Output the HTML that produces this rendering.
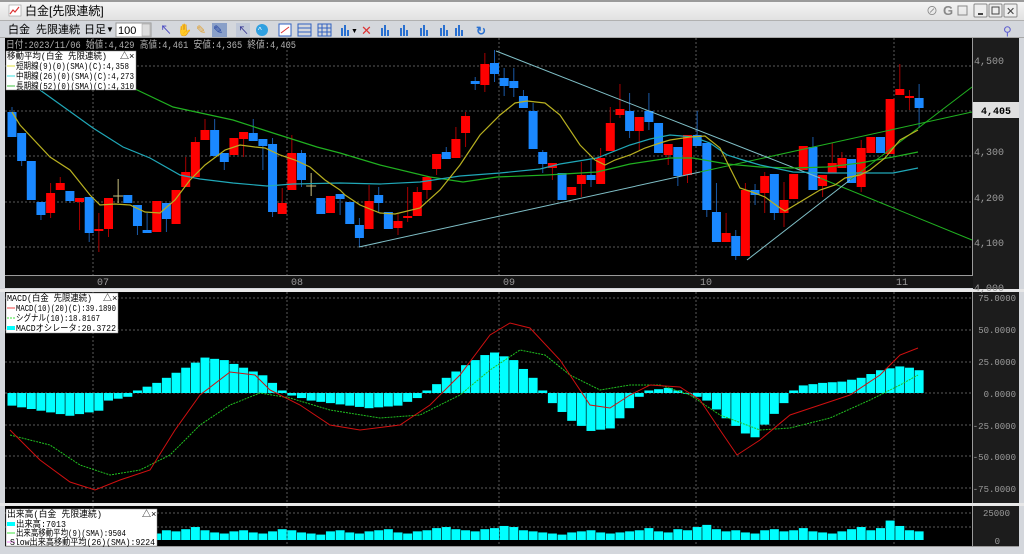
<!DOCTYPE html>
<html><head><meta charset="utf-8">
<style>
html,body{margin:0;padding:0;width:1024px;height:554px;overflow:hidden;background:#d4d7dc;}
svg{display:block}
text{font-family:"Liberation Mono","Noto Sans CJK JP",monospace;}
.ui{font-family:"Liberation Sans","Noto Sans CJK JP",sans-serif;}
</style></head><body>
<svg id="s" width="1024" height="554" xmlns="http://www.w3.org/2000/svg">
<defs><linearGradient id="tg" x1="0" y1="0" x2="0" y2="1"><stop offset="0" stop-color="#f4f4f4"/><stop offset="1" stop-color="#e2e2e2"/></linearGradient></defs>
<rect x="0" y="0" width="1024" height="554" fill="#d4d7dc"/>
<rect x="0" y="0" width="1024" height="2" fill="#9a9a9a"/>
<rect x="0" y="2" width="1024" height="18" fill="url(#tg)"/>
<rect x="0" y="20" width="1024" height="1" fill="#b0b0b0"/>
<rect x="0" y="21" width="1024" height="17" fill="#d4d7dc"/>
<rect x="0" y="37" width="1024" height="1" fill="#a8a8a8"/>
<rect x="9" y="5" width="12" height="11" fill="#fff" stroke="#999" stroke-width="0.6"/>
<polyline points="10,14 13,10 15,12 19,7" fill="none" stroke="#d33" stroke-width="1.2"/>
<text class="ui" x="25" y="15" font-size="12" fill="#000">白金[先限連続]</text>
<text class="ui" x="926" y="15" font-size="12" fill="#888">⊘</text>
<text class="ui" x="943" y="15" font-size="13" fill="#888" font-weight="bold">G</text>
<rect x="958" y="6" width="9" height="9" fill="none" stroke="#888"/>
<rect x="974" y="4" width="13" height="13" fill="#eee" stroke="#888" rx="1"/><rect x="978" y="13" width="5" height="2" fill="#444"/>
<rect x="989" y="4" width="13" height="13" fill="#eee" stroke="#888" rx="1"/><rect x="992" y="7" width="7" height="7" fill="none" stroke="#444"/>
<rect x="1004" y="4" width="13" height="13" fill="#eee" stroke="#888" rx="1"/><text class="ui" x="1006" y="15" font-size="11" fill="#444">✕</text>
<text class="ui" x="8" y="33" font-size="11" fill="#000">白金</text>
<text class="ui" x="36" y="33" font-size="11" fill="#000">先限連続</text>
<text class="ui" x="84" y="33" font-size="11" fill="#000">日足</text>
<text class="ui" x="106" y="32" font-size="8" fill="#000">▼</text>
<rect x="116" y="23" width="35" height="14" fill="#fff" stroke="#999"/>
<text class="ui" x="118" y="34" font-size="11" fill="#000">100</text>
<rect x="142" y="24" width="8" height="12" fill="#ddd" stroke="#999" stroke-width="0.5"/>
<text class="ui" x="160" y="34" font-size="12" fill="#4040c0">↖</text>
<text class="ui" x="177" y="34" font-size="12" fill="#d09040">✋</text>
<text class="ui" x="196" y="34" font-size="12" fill="#e0a030">✎</text>
<rect x="212" y="23" width="15" height="14" fill="#8aa0c8"/>
<text class="ui" x="213" y="34" font-size="12" fill="#2040a0">✎</text>
<rect x="236" y="23" width="14" height="14" fill="#c0c8d8"/><text class="ui" x="238" y="34" font-size="11" fill="#303090">↖</text>
<circle cx="262" cy="30" r="6" fill="#30a0e0"/><text class="ui" x="258" y="33" font-size="8" fill="#fff">^</text>
<rect x="279" y="24" width="12" height="12" fill="#fff" stroke="#3060c0"/><line x1="281" y1="33" x2="289" y2="27" stroke="#d33"/>
<rect x="298" y="24" width="13" height="12" fill="none" stroke="#3060c0"/><line x1="298" y1="28" x2="311" y2="28" stroke="#3060c0"/><line x1="298" y1="32" x2="311" y2="32" stroke="#3060c0"/>
<rect x="318" y="24" width="13" height="12" fill="none" stroke="#3060c0"/><line x1="318" y1="28" x2="331" y2="28" stroke="#3060c0"/><line x1="318" y1="32" x2="331" y2="32" stroke="#3060c0"/><line x1="322" y1="24" x2="322" y2="36" stroke="#3060c0"/><line x1="327" y1="24" x2="327" y2="36" stroke="#3060c0"/>
<g fill="#2a70d0"><rect x="341" y="28" width="2" height="8"/><rect x="344" y="25" width="2" height="11"/><rect x="347" y="30" width="2" height="6"/></g>
<text class="ui" x="351" y="33" font-size="7" fill="#000">▼</text>
<text class="ui" x="361" y="35" font-size="13" fill="#d33">✕</text>
<g fill="#2a70d0"><rect x="381" y="28" width="2" height="8"/><rect x="384" y="25" width="2" height="11"/><rect x="387" y="30" width="2" height="6"/></g>
<g fill="#2a70d0"><rect x="400" y="28" width="2" height="8"/><rect x="403" y="25" width="2" height="11"/><rect x="406" y="30" width="2" height="6"/></g>
<g fill="#2a70d0"><rect x="420" y="28" width="2" height="8"/><rect x="423" y="25" width="2" height="11"/><rect x="426" y="30" width="2" height="6"/></g>
<g fill="#2a70d0"><rect x="440" y="28" width="2" height="8"/><rect x="443" y="25" width="2" height="11"/><rect x="446" y="30" width="2" height="6"/></g>
<g fill="#2a70d0"><rect x="455" y="28" width="2" height="8"/><rect x="458" y="25" width="2" height="11"/><rect x="461" y="30" width="2" height="6"/></g>
<text class="ui" x="476" y="35" font-size="12" fill="#2a70d0" font-weight="bold">↻</text>
<text class="ui" x="1003" y="35" font-size="12" fill="#6060d0">⚲</text>
<rect x="5" y="38" width="968" height="238" fill="#000"/>
<rect x="5" y="276" width="968" height="12" fill="#151515"/>
<rect x="973" y="38" width="46" height="252" fill="#1c1c1c"/>
<rect x="972" y="38" width="1" height="238" fill="#9a9a9a"/>
<rect x="5" y="275" width="968" height="1" fill="#9a9a9a"/>
<rect x="0" y="289" width="1024" height="3" fill="#e8e8e8"/>
<rect x="5" y="292" width="968" height="211" fill="#000"/>
<rect x="973" y="292" width="46" height="211" fill="#1c1c1c"/>
<rect x="972" y="292" width="1" height="211" fill="#9a9a9a"/>
<rect x="0" y="503" width="1024" height="3" fill="#e8e8e8"/>
<rect x="5" y="506" width="968" height="40" fill="#000"/>
<rect x="973" y="506" width="46" height="40" fill="#1c1c1c"/>
<rect x="972" y="506" width="1" height="40" fill="#9a9a9a"/>
<rect x="5" y="546" width="1014" height="1" fill="#9a9a9a"/>
<g id="grid" stroke="#5a5a5a" stroke-width="1" stroke-dasharray="2,2" fill="none"></g>
<g id="plot"></g>
<g font-size="10" fill="#9a9a9a">
<text x="974" y="64">4,500</text>
<text x="974" y="155">4,300</text>
<text x="974" y="201">4,200</text>
<text x="974" y="246">4,100</text>
<text x="974" y="291">4,000</text>
<text x="97" y="285">07</text><text x="291" y="285">08</text><text x="503" y="285">09</text><text x="700" y="285">10</text><text x="896" y="285">11</text>
</g>
<g font-size="9" fill="#9a9a9a" text-anchor="end">
<text x="1016" y="301">75.0000</text>
<text x="1016" y="333">50.0000</text>
<text x="1016" y="365">25.0000</text>
<text x="1016" y="397">0.0000</text>
<text x="1016" y="429">-25.0000</text>
<text x="1016" y="460">-50.0000</text>
<text x="1016" y="492">-75.0000</text>
<text x="1010" y="516">25000</text>
<text x="1000" y="544">0</text>
</g>
<rect x="973" y="102" width="46" height="16" fill="#e0e0e0"/>
<text x="981" y="114" font-size="10" font-weight="bold" fill="#000">4,405</text>
<text x="6" y="48" font-size="10" fill="#b0b0b0" textLength="290" lengthAdjust="spacingAndGlyphs">日付:2023/11/06 始値:4,429 高値:4,461 安値:4,365 終値:4,405</text>
<g font-size="9" fill="#000">
<rect x="6" y="51" width="130" height="39" fill="#fff" stroke="#888" stroke-width="0.5"/>
<text x="7" y="59" textLength="100" lengthAdjust="spacingAndGlyphs">移動平均(白金 先限連続)</text><text x="120" y="59">△×</text>
<line x1="7" y1="66" x2="15" y2="66" stroke="#e0e040"/><text x="16" y="69" textLength="113" lengthAdjust="spacingAndGlyphs">短期線(9)(0)(SMA)(C):4,358</text>
<line x1="7" y1="76" x2="15" y2="76" stroke="#40e0e0"/><text x="16" y="79" textLength="118" lengthAdjust="spacingAndGlyphs">中期線(26)(0)(SMA)(C):4,273</text>
<line x1="7" y1="86" x2="15" y2="86" stroke="#40c040"/><text x="16" y="89" textLength="118" lengthAdjust="spacingAndGlyphs">長期線(52)(0)(SMA)(C):4,310</text>
<rect x="6" y="293" width="112" height="40" fill="#fff" stroke="#888" stroke-width="0.5"/>
<text x="7" y="301" textLength="85" lengthAdjust="spacingAndGlyphs">MACD(白金 先限連続)</text><text x="103" y="301">△×</text>
<line x1="7" y1="308" x2="15" y2="308" stroke="#f04040"/><text x="16" y="311" textLength="100" lengthAdjust="spacingAndGlyphs">MACD(10)(20)(C):39.1890</text>
<line x1="7" y1="318" x2="15" y2="318" stroke="#40e040" stroke-dasharray="2,1"/><text x="16" y="321" textLength="84" lengthAdjust="spacingAndGlyphs">シグナル(10):18.8167</text>
<rect x="7" y="326" width="8" height="4" fill="#00ffff"/><text x="16" y="331" textLength="100" lengthAdjust="spacingAndGlyphs">MACDオシレータ:20.3722</text>
<rect x="6" y="509" width="151" height="37" fill="#fff" stroke="#888" stroke-width="0.5"/>
<text x="7" y="517" textLength="95" lengthAdjust="spacingAndGlyphs">出来高(白金 先限連続)</text><text x="142" y="517">△×</text>
<rect x="7" y="522" width="8" height="4" fill="#00ffff"/><text x="16" y="527" textLength="50" lengthAdjust="spacingAndGlyphs">出来高:7013</text>
<line x1="7" y1="533" x2="15" y2="533" stroke="#40e040"/><text x="16" y="536" textLength="110" lengthAdjust="spacingAndGlyphs">出来高移動平均(9)(SMA):9504</text>
<line x1="7" y1="542" x2="15" y2="542" stroke="#f080f0"/><text x="10" y="545" textLength="145" lengthAdjust="spacingAndGlyphs">Slow出来高移動平均(26)(SMA):9224</text>
</g>
</svg>
<script>
var NS="http://www.w3.org/2000/svg",P=document.getElementById("plot"),G=document.getElementById("grid");
function el(t,a,par){var e=document.createElementNS(NS,t);for(var k in a)e.setAttribute(k,a[k]);(par||P).appendChild(e);return e;}
[93,287,499,696,894].forEach(function(x){el("line",{x1:x,y1:38,x2:x,y2:275},G);el("line",{x1:x,y1:292,x2:x,y2:503},G);el("line",{x1:x,y1:506,x2:x,y2:546},G);});
[66,111,156,202,247].forEach(function(y){el("line",{x1:5,y1:y,x2:972,y2:y},G);});
[298,330,362,393,425,456,488].forEach(function(y){el("line",{x1:5,y1:y,x2:972,y2:y},G);});
[513,527].forEach(function(y){el("line",{x1:5,y1:y,x2:972,y2:y},G);});
var C=[[1,112,137,107,137],[1,133,161,133,166],[1,161,200,161,200],[1,202,215,202,220],[0,193,213,183,218],[0,183,190,177,190],[1,191,201,191,203],[0,198,202,198,230],[1,197,233,197,242],[0,229,231,213,252],
[0,198,229,198,237],[2,196,196,179,203],[1,195,203,195,203],[1,205,226,205,235],[1,230,233,213,233],[0,201,232,201,232],[1,203,219,203,232],[0,190,224,190,224],[0,172,187,157,187],[0,142,177,137,177],
[0,130,140,119,140],[1,130,156,119,156],[1,153,162,153,170],[0,138,155,138,155],[0,132,139,132,157],[1,133,141,119,141],[1,139,146,139,170],[1,144,212,138,217],[0,203,214,188,214],[0,153,190,135,190],
[1,153,180,150,187],[2,186,186,173,196],[1,198,214,198,214],[0,196,213,196,213],[1,194,199,194,215],[1,202,224,202,224],[1,225,238,218,247],[0,201,229,185,229],[1,195,203,187,213],[1,212,229,212,229],
[0,221,228,214,235],[0,216,218,187,222],[0,192,216,187,216],[0,177,190,177,199],[0,154,169,154,175],[1,152,159,147,159],[0,139,158,127,158],[0,116,133,112,147],[1,81,84,77,90],[0,64,85,53,92],
[1,63,74,50,82],[1,78,86,68,96],[1,81,88,68,97],[1,96,108,90,108],[1,111,149,103,149],[1,152,164,150,173],[0,163,168,163,180],[1,173,200,173,200],[0,187,195,187,195],[0,175,184,162,197],
[1,175,180,160,187],[0,158,184,148,184],[0,123,151,107,151],[0,109,115,84,118],[1,111,131,93,138],[0,117,131,117,150],[1,111,122,93,130],[1,123,153,123,153],[0,144,155,144,165],[1,147,176,147,186],
[0,135,175,135,183],[1,135,146,111,146],[1,143,210,143,217],[1,212,242,183,242],[0,233,242,213,242],[1,236,256,230,260],[0,190,256,183,256],[1,190,195,184,205],[0,176,193,172,213],[1,174,213,174,220],
[0,200,213,182,227],[0,174,199,174,199],[0,146,170,146,170],[1,147,190,137,190],[0,175,186,175,197],[0,163,173,143,173],[0,158,168,152,168],[1,159,183,159,183],[0,148,187,140,192],[0,137,153,137,153],
[1,137,153,137,153],[0,99,154,99,154],[0,89,95,64,95],[0,96,98,90,110],[1,98,108,84,128]];
function cx(i){return 12+9.65*i;}
C.forEach(function(c,i){var x=cx(i);
 if(c[0]==2){el("line",{x1:x,y1:c[3],x2:x,y2:c[4],stroke:"#c8c080"});el("line",{x1:x-5,y1:c[1],x2:x+5,y2:c[1],stroke:"#c8c080"});return;}
 var col=c[0]==0?"#ff0000":"#1a88ff",wc=c[0]==0?"#a80000":"#1a5aa8";
 el("line",{x1:x,y1:c[3],x2:x,y2:c[4],stroke:wc});
 el("rect",{x:x-4.5,y:c[1],width:9,height:Math.max(1,c[2]-c[1]),fill:col});
});
function pl(pts,col,w,dash){var a={points:pts,fill:"none",stroke:col,"stroke-width":w||1};if(dash)a["stroke-dasharray"]=dash;el("polyline",a);}
pl("359,247 700,172","#80c0c8",1);
pl("700,172 972,112","#20b020",1);
pl("496,51 820,178","#80c0c8",1);
pl("820,178 972,240","#20b020",1);
pl("747,260 850,180","#80c0c8",1);
pl("850,180 972,87","#20b020",1);
pl("133,88 173,107 233,120 273,133 317,147 340,153 380,165 430,177 463,182 497,177 547,175 597,172 630,164 670,158 693,158 727,164 760,167 793,168 827,167 860,163 893,157 918,152","#20b020",1.2);
pl("40,90 93,128 123,147 150,158 180,175 200,179 233,183 267,186 293,184 340,183 380,184 420,182 460,176 500,173 540,169 560,164 597,158 630,145 650,139 670,135 693,137 710,143 727,155 743,160 760,165 793,172 827,173 860,173 893,173 918,168","#20a8b8",1.2);
pl("12,112 20,125 50,157 70,170 90,195 100,205 115,204 130,205 145,212 160,213 175,200 190,180 205,165 225,150 240,145 255,147 265,148 280,155 295,160 310,167 325,180 340,190 345,195 360,205 380,213 395,214 420,208 440,190 460,165 480,135 500,115 515,103 527,101 545,103 560,115 580,145 595,160 605,165 615,160 630,155 645,148 660,143 670,140 690,137 705,136 720,148 730,168 740,188 752,192 765,197 780,208 785,211 795,205 810,196 820,190 835,185 845,178 860,175 870,170 885,158 900,140 918,130","#b8b020",1.2);
var H=[[0,-10],[3,-14],[6,-18],[9,-14],[10,-6],[12,-3],[13,2],[15,8],[18,20],[20,28],[22,26],[24,20],[26,14],[28,2],[29,-2],[31,-6],[34,-9],[37,-12],[40,-10],[42,-4],[43,2],[45,12],[47,22],[49,30],[50,32],[52,26],[54,12],[55,2],[56,-8],[58,-22],[60,-30],[62,-28],[64,-12],[65,-3],[66,2],[68,4],[70,0],[72,-6],[74,-20],[76,-32],[77,-35],[78,-25],[80,-8],[81,2],[82,6],[84,8],[86,9],[88,12],[90,18],[92,21],[93,20],[94,18]];
function interp(K,i){for(var k=0;k<K.length-1;k++){if(i>=K[k][0]&&i<=K[k+1][0]){var t=(i-K[k][0])/(K[k+1][0]-K[k][0]);return K[k][1]+t*(K[k+1][1]-K[k][1]);}}return K[K.length-1][1];}
for(var i=0;i<95;i++){var v=interp(H,i),y0=393,y1=393-v*1.265;el("rect",{x:cx(i)-4.5,y:Math.min(y0,y1),width:9,height:Math.max(0.8,Math.abs(y1-y0)),fill:"#00ffff"});}
pl("10,435 50,445 80,465 110,475 140,470 170,455 200,425 230,405 260,393 290,398 330,410 380,418 420,415 460,395 490,370 520,350 545,355 570,375 600,390 630,385 660,385 690,395 720,415 760,430 790,428 830,418 870,400 900,385 918,375","#20c020",1,"2,1");
pl("10,430 40,460 70,482 95,490 120,480 150,470 175,430 200,395 230,372 255,375 270,390 300,405 330,425 360,430 400,425 430,405 460,375 490,335 510,323 530,328 560,360 590,405 610,408 630,395 650,385 680,387 700,400 720,430 737,455 760,440 790,415 820,405 850,395 880,375 900,355 918,348","#d01010",1);
var V=[6,8,5,9,7,6,10,8,7,9,6,5,8,11,7,6,9,8,10,12,9,7,6,8,9,7,6,8,10,9,7,6,5,8,9,7,6,8,9,10,7,6,8,9,11,12,10,9,8,10,11,13,12,9,8,7,6,5,7,8,9,7,6,7,8,9,11,8,7,10,9,12,14,10,8,9,7,6,9,10,8,9,11,8,7,6,8,10,12,9,11,18,13,9,8];
V.forEach(function(v,i){var h=v*1.08;el("rect",{x:cx(i)-4.5,y:540-h,width:9,height:h,fill:"#00ffff"});});
</script>
</body></html>
